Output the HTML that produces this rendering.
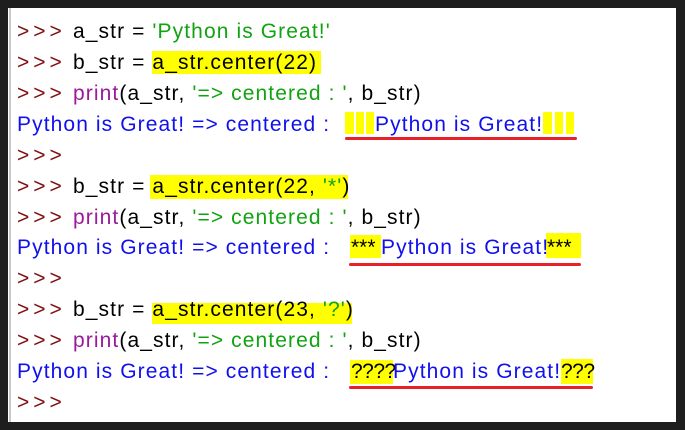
<!DOCTYPE html>
<html><head><meta charset="utf-8"><style>
html,body{margin:0;padding:0;}
body{width:685px;height:430px;background:#1e1e1e;position:relative;overflow:hidden;font-family:"Liberation Sans",sans-serif;font-size:21px;}
#w{position:absolute;left:8px;top:8px;width:668px;height:414px;background:#fff;}
#g{position:absolute;left:9px;top:8px;width:2px;height:414px;background:#c8c8c8;}
.t{position:absolute;white-space:pre;line-height:24px;letter-spacing:1.1px;}
.p{color:#7f1010;letter-spacing:4px;}
.k{color:#000;}
.s{color:#12a312;}
.f{color:#9a1a9a;}
.b{color:#1010ee;}
.h{position:absolute;background:#ffff00;}
.u{position:absolute;height:3px;background:#e8202a;border-radius:2px;}
</style></head><body>
<div id="w"></div><div id="g"></div>

<div class="h" style="left:152px;top:51px;width:169px;height:23px"></div>
<div class="h" style="left:345px;top:112px;width:9px;height:22px"></div>
<div class="h" style="left:356px;top:112px;width:8px;height:22px"></div>
<div class="h" style="left:366px;top:112px;width:8px;height:22px"></div>
<div class="h" style="left:543px;top:112px;width:9px;height:22px"></div>
<div class="h" style="left:555px;top:112px;width:8px;height:22px"></div>
<div class="h" style="left:566px;top:112px;width:8px;height:22px"></div>
<div class="h" style="left:150px;top:175px;width:198px;height:24px"></div>
<div class="h" style="left:350px;top:235px;width:31px;height:23px"></div>
<div class="h" style="left:546px;top:233px;width:35px;height:25px"></div>
<div class="h" style="left:152px;top:303px;width:200px;height:21px"></div>
<div class="h" style="left:350px;top:360px;width:43px;height:24px"></div>
<div class="h" style="left:561px;top:359px;width:32px;height:25px"></div>

<div class="u" style="left:345px;top:137px;width:232px"></div>
<div class="u" style="left:349px;top:263px;width:232px"></div>
<div class="u" style="left:349px;top:386px;width:244px"></div>

<div class="t p" style="left:17px;top:20px">&gt;&gt;&gt;</div>
<div class="t" style="left:73px;top:20px"><span class="k">a_str = </span><span class="s">'Python is Great!'</span></div>

<div class="t p" style="left:17px;top:51px">&gt;&gt;&gt;</div>
<div class="t k" style="left:73px;top:51px">b_str = a_str.center(22)</div>

<div class="t p" style="left:17px;top:82px">&gt;&gt;&gt;</div>
<div class="t" style="left:73px;top:82px"><span class="f">print</span><span class="k">(a_str, </span><span class="s">'=&gt; centered : '</span><span class="k">, b_str)</span></div>

<div class="t b" style="left:17px;top:113px">Python is Great! =&gt; centered :</div>
<div class="t b" style="left:375px;top:113px">Python is Great!</div>

<div class="t p" style="left:17px;top:144px">&gt;&gt;&gt;</div>

<div class="t p" style="left:17px;top:175px">&gt;&gt;&gt;</div>
<div class="t" style="left:73px;top:175px"><span class="k">b_str = a_str.center(22, </span><span class="s">'*'</span><span class="k">)</span></div>

<div class="t p" style="left:17px;top:206px">&gt;&gt;&gt;</div>
<div class="t" style="left:73px;top:206px"><span class="f">print</span><span class="k">(a_str, </span><span class="s">'=&gt; centered : '</span><span class="k">, b_str)</span></div>

<div class="t b" style="left:17px;top:236px">Python is Great! =&gt; centered :</div>
<div class="t k" style="left:351px;top:236px;letter-spacing:0">***</div>
<div class="t b" style="left:381px;top:236px">Python is Great!</div>
<div class="t k" style="left:547px;top:236px;letter-spacing:0">***</div>

<div class="t p" style="left:17px;top:267px">&gt;&gt;&gt;</div>

<div class="t p" style="left:17px;top:298px">&gt;&gt;&gt;</div>
<div class="t" style="left:73px;top:298px"><span class="k">b_str = a_str.center(23, </span><span class="s">'?'</span><span class="k">)</span></div>

<div class="t p" style="left:17px;top:329px">&gt;&gt;&gt;</div>
<div class="t" style="left:73px;top:329px"><span class="f">print</span><span class="k">(a_str, </span><span class="s">'=&gt; centered : '</span><span class="k">, b_str)</span></div>

<div class="t b" style="left:17px;top:360px">Python is Great! =&gt; centered :</div>
<div class="t k" style="left:351px;top:360px;letter-spacing:-0.5px">????</div>
<div class="t b" style="left:393px;top:360px">Python is Great!</div>
<div class="t k" style="left:561px;top:360px;letter-spacing:-0.5px">???</div>

<div class="t p" style="left:17px;top:391px">&gt;&gt;&gt;</div>
</body></html>
